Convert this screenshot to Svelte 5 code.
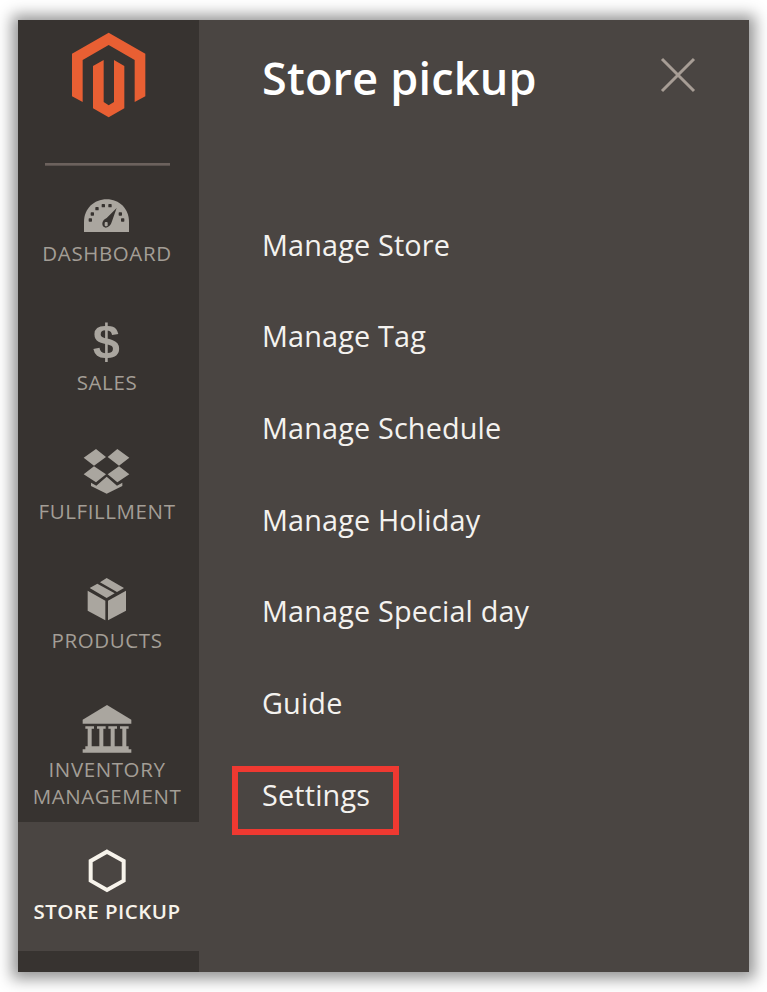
<script>
  const modules = [
    { id: 'dashboard', label: 'Dashboard', view: '171 -63 180 231' },
    { id: 'sales', label: 'Sales', view: '171 -51 180 231' },
    { id: 'fulfillment', label: 'Fulfillment', view: '171 -54 180 231' },
    { id: 'products', label: 'Products', view: '171 -57 180 231' },
    { id: 'inventory', label: 'Inventory Management', view: '171 -45 180 231' },
    { id: 'pickup', label: 'Store pickup', view: '231 21 180 231', active: true }
  ];
  const dots = [[211, 105], [217, 87], [231, 71], [250, 62], [270, 62], [301, 87], [308, 105]];
  const columns = [209, 244, 278, 313];
  const links = ['Manage Store', 'Manage Tag', 'Manage Schedule', 'Manage Holiday', 'Manage Special day', 'Guide', 'Settings'];
</script>

<main>
  <div class="window">
    <nav class="sidebar">
      <svg class="logo" viewBox="54 60 543 429" aria-label="Magento">
        <path d="M326 98 436 161V289L404 306V180L326 135 248 180V306L216 289V161Z" />
        <path d="M279 198 311 180V306L326 316 342 306V180L373 198V325L326 352 279 325Z" />
      </svg>
      <div class="rule"></div>
      {#each modules as item}
        <a class="module {item.id}" class:active={item.active}>
          <svg class="icon" viewBox={item.view}>
            {#if item.id === 'dashboard'}
              <path d="M192 141V111C192 71 222 43 260 43S327 71 327 111V141Z" />
              {#each dots as [x, y]}
                <rect class="cut" x={x - 5} y={y - 5} width="10" height="10" rx="2" />
              {/each}
              <path class="cut" d="M290 69 276 109Q271 127 257 128 246 126 247 114 249 104 260 99Z" />
              <rect x="254" y="111" width="9" height="13" rx="3" />
            {:else if item.id === 'sales'}
              <text x="259" y="143" text-anchor="middle">$</text>
            {:else if item.id === 'fulfillment'}
              <path d="M191 53 228 27 258 51 222 77ZM263 51 292 27 328 53 297 77ZM222 79 258 103 228 127 191 103ZM297 79 328 103 292 127 263 103Z" />
              <path d="M260 110 291 137 307 128V138L260 161 213 138V128L229 137Z" />
            {:else if item.id === 'products'}
              <path d="M203 62 256 92V151L203 122ZM318 62 264 92V151L318 122Z" />
              <path d="M209 54 232 41 284 70 260 84ZM240 37 260 24 312 54 291 66Z" />
            {:else if item.id === 'inventory'}
              <path d="M261 30 334 74V86H188V74Z" />
              {#each columns as x}
                <path d="M{x - 13} 94H{x + 13}V101H{x + 6}V157H{x - 6}V101H{x - 13}Z" />
              {/each}
              <path d="M196 154H326V163H334V173H188V163H196Z" />
            {:else}
              <path class="hexagon" d="M321 110 371 138V197L321 225 272 197V138Z" />
            {/if}
          </svg>
          <span class="label">{item.label}</span>
        </a>
      {/each}
    </nav>
    <section class="submenu">
      <header>
        <h1>Store pickup</h1>
        <svg class="close" viewBox="0 0 36 36"><path d="M2 2 34 34M34 2 2 34" /></svg>
      </header>
      <ul>
        {#each links as link}
          <li class:highlighted={link === 'Settings'}>{link}</li>
        {/each}
      </ul>
    </section>
  </div>
</main>

<style>
  :global(body) { background: #fff; }
  main {
    box-sizing: border-box;
    width: 767px;
    height: 992px;
    padding: 20px 18px;
    overflow: hidden;
  }
  .window {
    display: flex;
    width: 731px;
    height: 952px;
    background: #4a4542;
    box-shadow: 0 1px 14px 6px rgba(0, 0, 0, 0.42);
    font-family: "Open Sans", "Noto Sans", sans-serif;
  }
  .sidebar {
    box-sizing: border-box;
    display: flex;
    flex: 0 0 181px;
    flex-direction: column;
    background: #373330;
  }
  .logo { display: block; flex: none; width: 181px; height: 143px; fill: #e85f33; }
  .rule {
    box-sizing: border-box;
    flex: none;
    height: 3px;
    margin: 0 29px -2px 27px;
    background: #6c625d;
    border-bottom: 1px solid #5a524e;
  }
  .module {
    box-sizing: border-box;
    flex: none;
    display: flex;
    flex-direction: column;
    align-items: center;
    height: 129px;
    padding-right: 3px;
    color: #a39e96;
  }
  .inventory { height: 142px; }
  .active { background: #4a4542; color: #f7f3eb; }
  .icon { display: block; flex: none; width: 60px; height: 77px; margin-bottom: -1px; fill: #aaa69f; }
  .icon text { font: bold 146px "Liberation Sans", sans-serif; }
  .cut { fill: #373330; }
  .hexagon { fill: none; stroke: #f7f3eb; stroke-width: 12; }
  .label {
    width: 162px;
    text-align: center;
    text-transform: uppercase;
    font-size: 20.5px;
    line-height: 27px;
    letter-spacing: 0.6px;
  }
  .active .label { font-weight: 600; letter-spacing: 0.45px; white-space: nowrap; }
  .submenu { flex: 1; padding: 0 53px 0 63px; }
  header { display: flex; justify-content: space-between; height: 178.5px; }
  h1 {
    margin: 27px 0 0;
    color: #fff;
    font-size: 45px;
    font-weight: 600;
    line-height: 62px;
    letter-spacing: 0.2px;
    white-space: nowrap;
  }
  .close { width: 36px; height: 36px; margin-top: 37px; fill: none; stroke: #a79d95; stroke-width: 3; }
  ul { margin: 0; padding: 0; list-style: none; }
  li {
    position: relative;
    height: 91.7px;
    box-sizing: border-box;
    padding-top: 26px;
    color: #f4f2ef;
    font-size: 28.8px;
    line-height: 40px;
    letter-spacing: 0.16px;
    white-space: nowrap;
  }
  .highlighted::after {
    content: "";
    position: absolute;
    left: -30px;
    top: 17.5px;
    width: 167px;
    height: 69px;
    box-sizing: border-box;
    border: 6px solid #ef3931;
  }
</style>
